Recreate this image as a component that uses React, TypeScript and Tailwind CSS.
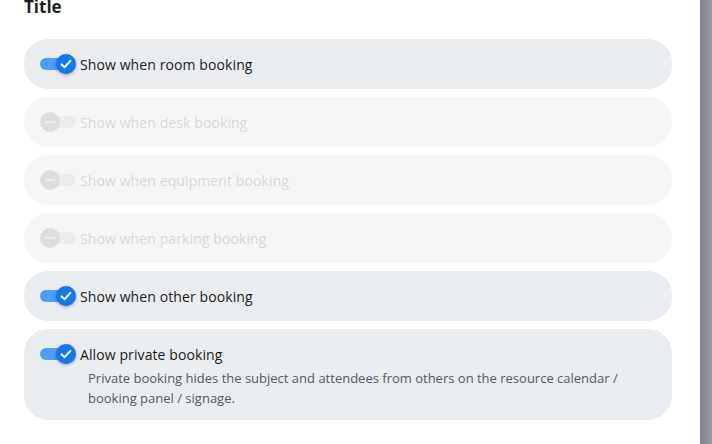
import React from 'react'

type Option = {
  label: string
  on: boolean
  disabled?: boolean
  description?: string
}

const options: Option[] = [
  { label: 'Show when room booking', on: true },
  { label: 'Show when desk booking', on: false, disabled: true },
  { label: 'Show when equipment booking', on: false, disabled: true },
  { label: 'Show when parking booking', on: false, disabled: true },
  { label: 'Show when other booking', on: true },
  {
    label: 'Allow private booking',
    on: true,
    description:
      'Private booking hides the subject and attendees from others on the resource calendar / booking panel / signage.',
  },
]

function Toggle({ on }: { on: boolean }) {
  if (on) {
    return (
      <div className="relative w-[36px] h-[20px] shrink-0">
        <div className="absolute left-0 top-[4px] w-[32px] h-[12px] rounded-full bg-[#4d9fff]" />
        <div className="absolute right-0 top-0 w-[20px] h-[20px] rounded-full bg-[#1479f0] shadow-[0_1px_3px_rgba(0,0,0,0.35)] flex items-center justify-center">
          <svg width="14" height="14" viewBox="0 0 14 14" fill="none">
            <path d="M2.6 7.4 L5.6 10.2 L11.4 3.8" stroke="white" strokeWidth="2" strokeLinecap="round" strokeLinejoin="round" />
          </svg>
        </div>
      </div>
    )
  }
  return (
    <div className="relative w-[36px] h-[20px] shrink-0">
      <div className="absolute left-[4px] top-[4px] w-[32px] h-[12px] rounded-full bg-[#ebeced]" />
      <div className="absolute left-0 top-0 w-[20px] h-[20px] rounded-full bg-[#dcdddf] flex items-center justify-center">
        <div className="w-[10px] h-[2px] rounded-full bg-[#e9eaeb]" />
      </div>
    </div>
  )
}

export default function App() {
  return (
    <div className="flex w-[712px] h-[444px] overflow-hidden bg-white" style={{ fontFamily: '"Open Sans", "Noto Sans", sans-serif' }}>
      <div className="w-[700px] pl-[24px] pr-[28px]">
        <h2 className="text-[17px] font-bold leading-[24px] text-[#1f1f1f] mt-[-5px]">Title</h2>
        <div className="mt-[20px] flex flex-col gap-[8px]">
          {options.map((o) => (
            <div
              key={o.label}
              className={
                o.disabled
                  ? 'rounded-[24px] bg-[#f5f7f7] px-[16px] py-[15px]'
                  : o.description
                  ? 'rounded-[24px] bg-[#eaedf0] px-[16px] pt-[15px] pb-[12px]'
                  : 'rounded-[24px] bg-[#eaedf0] px-[16px] py-[15px]'
              }
            >
              <div className="flex items-center gap-[4px] h-[20px]">
                <Toggle on={o.on} />
                <span
                  className={
                    o.disabled
                      ? 'text-[14px] font-medium text-[#d6d8da] tracking-[0.1px]'
                      : 'text-[14px] font-medium text-[#1a1a1a] tracking-[0.1px]'
                  }
                >
                  {o.label}
                </span>
              </div>
              {o.description && (
                <p className="mt-[4px] ml-[48px] text-[13px] leading-[20px] text-[#555a60] pr-[8px]">
                  {o.description}
                </p>
              )}
            </div>
          ))}
        </div>
      </div>
      <div className="w-[12px] h-full bg-gradient-to-r from-[#7f838b] to-[#969aa2]" />
    </div>
  )
}
